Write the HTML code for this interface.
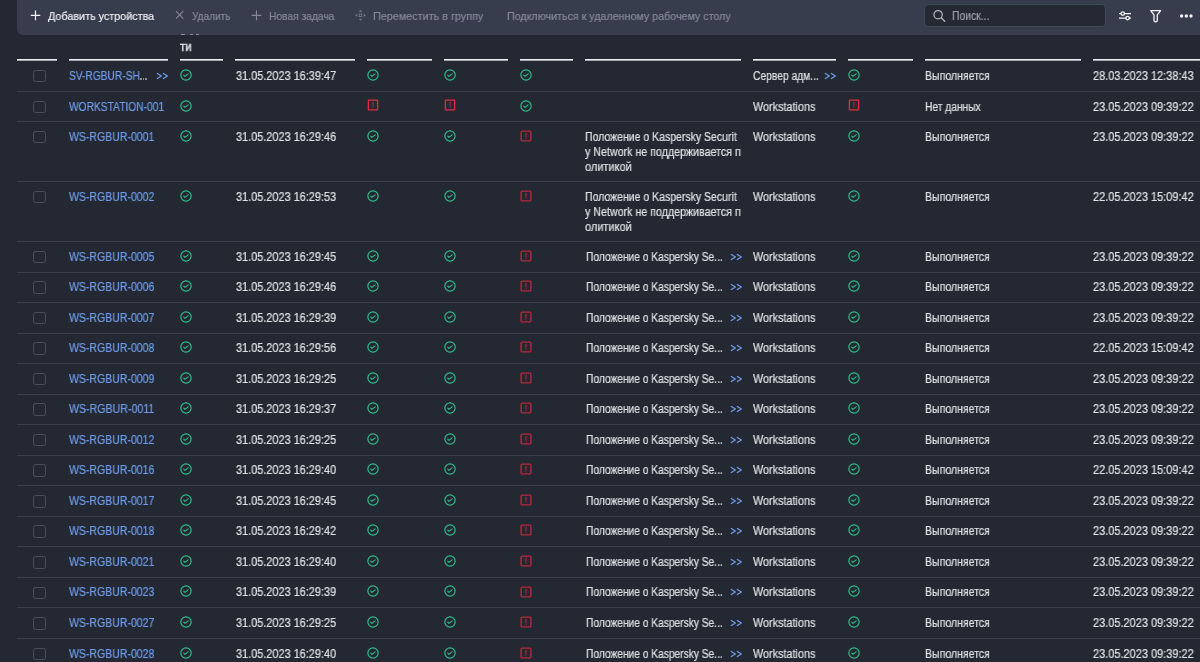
<!DOCTYPE html>
<html><head><meta charset="utf-8"><style>
html,body{margin:0;padding:0;}
body{width:1200px;height:662px;overflow:hidden;background:#232833;position:relative;font-family:"Liberation Sans",sans-serif;font-size:12px;line-height:15px;}
.t{position:absolute;white-space:nowrap;transform-origin:0 0;z-index:1;will-change:transform;-webkit-text-stroke:0.2px currentColor}
.tb{z-index:5}
</style></head><body>

<div style="position:absolute;left:17px;top:-10px;width:1200px;height:44.5px;background:#383d4e;border-radius:6px;z-index:2"></div>
<div style="position:absolute;left:923.7px;top:4.3px;width:180.8px;height:21px;background:#242934;border:1px solid #3e4b55;border-radius:4px;z-index:3"></div>
<svg style="position:absolute;left:0;top:0;z-index:4" width="1200" height="34" viewBox="0 0 1200 34">
 <path d="M35.5 10.6 V20.2 M30.7 15.4 H40.3" stroke="#f1f2f4" stroke-width="1.2"/>
 <path d="M176 11.2 L183.3 18.7 M183.3 11.2 L176 18.7" stroke="#858995" stroke-width="1.1"/>
 <path d="M256.5 10.6 V20.2 M251.7 15.4 H261.3" stroke="#858995" stroke-width="1.1"/>
 <g fill="#727788">
  <path d="M360.5 9.8 L362.3 11.9 H358.7 Z"/>
  <path d="M360.5 20.8 L362.3 18.7 H358.7 Z"/>
  <path d="M355.1 15.3 L357.2 13.5 V17.1 Z"/>
  <path d="M365.9 15.3 L363.8 13.5 V17.1 Z"/>
 </g>
 <rect x="359.2" y="14" width="2.6" height="2.6" fill="none" stroke="#727788" stroke-width="0.9"/>
 <circle cx="938.1" cy="14.7" r="4.15" fill="none" stroke="#b3b6bd" stroke-width="1.25"/>
 <path d="M941.2 17.8 L944.7 21.3" stroke="#b3b6bd" stroke-width="1.35" stroke-linecap="round"/>
 <g stroke="#f4f5f6" stroke-width="1.3" fill="none">
  <path d="M1119 13.6 H1131 M1119 18.1 H1131"/>
  <circle cx="1122.75" cy="13.6" r="1.7" fill="#383d4e"/>
  <circle cx="1127.6" cy="18.1" r="1.7" fill="#383d4e"/>
  <path d="M1150.7 10.7 H1160.6 L1157.3 14.9 V20.3 A1.65 1.65 0 0 1 1154 20.3 V14.9 Z" stroke-linejoin="round"/>
 </g>
 <g fill="#f4f5f6"><circle cx="1181.6" cy="16" r="1.65"/><circle cx="1186.3" cy="16" r="1.65"/><circle cx="1191" cy="16" r="1.65"/></g>
</svg>

<div style="position:absolute;left:33.3px;top:69.60px;width:10.6px;height:10.6px;border:1px solid #4a4f5b;border-radius:2.5px"></div><div style="position:absolute;left:140.1px;top:78.00px;width:1.7px;height:1.8px;background:#8f9299;border-radius:0.3px"></div><div style="position:absolute;left:142.6px;top:78.00px;width:1.7px;height:1.8px;background:#8f9299;border-radius:0.3px"></div><div style="position:absolute;left:145.1px;top:78.00px;width:1.7px;height:1.8px;background:#8f9299;border-radius:0.3px"></div><svg style="position:absolute;left:156.30px;top:72.00px" width="14" height="8" viewBox="0 0 14 8"><path d="M1.3 1.5 L5.4 4 L1.3 6.5 M7.3 1.5 L11.4 4 L7.3 6.5" fill="none" stroke="#709de9" stroke-width="1.2" stroke-linecap="round" stroke-linejoin="round"/></svg><svg style="position:absolute;left:179.50px;top:68.50px" width="12" height="12" viewBox="0 0 12 12"><circle cx="6" cy="6" r="5.15" fill="none" stroke="#31bf8b" stroke-width="1.15"/><path d="M3.75 6.1 L4.95 7.4 L8.15 4.85" fill="none" stroke="#31bf8b" stroke-width="1.05" stroke-linecap="round" stroke-linejoin="round"/></svg><svg style="position:absolute;left:366.50px;top:68.50px" width="12" height="12" viewBox="0 0 12 12"><circle cx="6" cy="6" r="5.15" fill="none" stroke="#31bf8b" stroke-width="1.15"/><path d="M3.75 6.1 L4.95 7.4 L8.15 4.85" fill="none" stroke="#31bf8b" stroke-width="1.05" stroke-linecap="round" stroke-linejoin="round"/></svg><svg style="position:absolute;left:443.50px;top:68.50px" width="12" height="12" viewBox="0 0 12 12"><circle cx="6" cy="6" r="5.15" fill="none" stroke="#31bf8b" stroke-width="1.15"/><path d="M3.75 6.1 L4.95 7.4 L8.15 4.85" fill="none" stroke="#31bf8b" stroke-width="1.05" stroke-linecap="round" stroke-linejoin="round"/></svg><svg style="position:absolute;left:519.50px;top:68.50px" width="12" height="12" viewBox="0 0 12 12"><circle cx="6" cy="6" r="5.15" fill="none" stroke="#31bf8b" stroke-width="1.15"/><path d="M3.75 6.1 L4.95 7.4 L8.15 4.85" fill="none" stroke="#31bf8b" stroke-width="1.05" stroke-linecap="round" stroke-linejoin="round"/></svg><svg style="position:absolute;left:824.00px;top:72.00px" width="14" height="8" viewBox="0 0 14 8"><path d="M1.3 1.5 L5.4 4 L1.3 6.5 M7.3 1.5 L11.4 4 L7.3 6.5" fill="none" stroke="#709de9" stroke-width="1.2" stroke-linecap="round" stroke-linejoin="round"/></svg><svg style="position:absolute;left:847.50px;top:68.50px" width="12" height="12" viewBox="0 0 12 12"><circle cx="6" cy="6" r="5.15" fill="none" stroke="#31bf8b" stroke-width="1.15"/><path d="M3.75 6.1 L4.95 7.4 L8.15 4.85" fill="none" stroke="#31bf8b" stroke-width="1.05" stroke-linecap="round" stroke-linejoin="round"/></svg><div style="position:absolute;left:17px;right:0;top:91.00px;height:1px;background:#3a3f4b"></div><div style="position:absolute;left:33.3px;top:100.60px;width:10.6px;height:10.6px;border:1px solid #4a4f5b;border-radius:2.5px"></div><svg style="position:absolute;left:179.50px;top:99.50px" width="12" height="12" viewBox="0 0 12 12"><circle cx="6" cy="6" r="5.15" fill="none" stroke="#31bf8b" stroke-width="1.15"/><path d="M3.75 6.1 L4.95 7.4 L8.15 4.85" fill="none" stroke="#31bf8b" stroke-width="1.05" stroke-linecap="round" stroke-linejoin="round"/></svg><svg style="position:absolute;left:366.90px;top:99.40px" width="12" height="12" viewBox="0 0 12 12"><rect x="1.4" y="1.1" width="9.2" height="9.8" rx="0.4" fill="none" stroke="#e52a40" stroke-width="1.3"/><path d="M6 3.1 V7.2" stroke="#e52a40" stroke-width="1" stroke-linecap="round" opacity="0.85"/><circle cx="6" cy="8.8" r="0.55" fill="#e52a40" opacity="0.8"/></svg><svg style="position:absolute;left:443.90px;top:99.40px" width="12" height="12" viewBox="0 0 12 12"><rect x="1.4" y="1.1" width="9.2" height="9.8" rx="0.4" fill="none" stroke="#e52a40" stroke-width="1.3"/><path d="M6 3.1 V7.2" stroke="#e52a40" stroke-width="1" stroke-linecap="round" opacity="0.85"/><circle cx="6" cy="8.8" r="0.55" fill="#e52a40" opacity="0.8"/></svg><svg style="position:absolute;left:519.50px;top:99.50px" width="12" height="12" viewBox="0 0 12 12"><circle cx="6" cy="6" r="5.15" fill="none" stroke="#31bf8b" stroke-width="1.15"/><path d="M3.75 6.1 L4.95 7.4 L8.15 4.85" fill="none" stroke="#31bf8b" stroke-width="1.05" stroke-linecap="round" stroke-linejoin="round"/></svg><svg style="position:absolute;left:847.90px;top:99.40px" width="12" height="12" viewBox="0 0 12 12"><rect x="1.4" y="1.1" width="9.2" height="9.8" rx="0.4" fill="none" stroke="#e52a40" stroke-width="1.3"/><path d="M6 3.1 V7.2" stroke="#e52a40" stroke-width="1" stroke-linecap="round" opacity="0.85"/><circle cx="6" cy="8.8" r="0.55" fill="#e52a40" opacity="0.8"/></svg><div style="position:absolute;left:17px;right:0;top:121.00px;height:1px;background:#3a3f4b"></div><div style="position:absolute;left:33.3px;top:130.60px;width:10.6px;height:10.6px;border:1px solid #4a4f5b;border-radius:2.5px"></div><svg style="position:absolute;left:179.50px;top:129.50px" width="12" height="12" viewBox="0 0 12 12"><circle cx="6" cy="6" r="5.15" fill="none" stroke="#31bf8b" stroke-width="1.15"/><path d="M3.75 6.1 L4.95 7.4 L8.15 4.85" fill="none" stroke="#31bf8b" stroke-width="1.05" stroke-linecap="round" stroke-linejoin="round"/></svg><svg style="position:absolute;left:366.50px;top:129.50px" width="12" height="12" viewBox="0 0 12 12"><circle cx="6" cy="6" r="5.15" fill="none" stroke="#31bf8b" stroke-width="1.15"/><path d="M3.75 6.1 L4.95 7.4 L8.15 4.85" fill="none" stroke="#31bf8b" stroke-width="1.05" stroke-linecap="round" stroke-linejoin="round"/></svg><svg style="position:absolute;left:443.50px;top:129.50px" width="12" height="12" viewBox="0 0 12 12"><circle cx="6" cy="6" r="5.15" fill="none" stroke="#31bf8b" stroke-width="1.15"/><path d="M3.75 6.1 L4.95 7.4 L8.15 4.85" fill="none" stroke="#31bf8b" stroke-width="1.05" stroke-linecap="round" stroke-linejoin="round"/></svg><svg style="position:absolute;left:519.60px;top:129.60px" width="12" height="12" viewBox="0 0 12 12"><rect x="1.1" y="1.1" width="9.8" height="9.8" rx="0.9" fill="none" stroke="#b6283b" stroke-width="1.4"/><path d="M6 3.4 V6.9" stroke="#b6283b" stroke-width="1.1" stroke-linecap="round"/><circle cx="6" cy="8.6" r="0.6" fill="#b6283b" opacity="0.8"/></svg><svg style="position:absolute;left:847.50px;top:129.50px" width="12" height="12" viewBox="0 0 12 12"><circle cx="6" cy="6" r="5.15" fill="none" stroke="#31bf8b" stroke-width="1.15"/><path d="M3.75 6.1 L4.95 7.4 L8.15 4.85" fill="none" stroke="#31bf8b" stroke-width="1.05" stroke-linecap="round" stroke-linejoin="round"/></svg><div style="position:absolute;left:17px;right:0;top:181.00px;height:1px;background:#3a3f4b"></div><div style="position:absolute;left:33.3px;top:190.60px;width:10.6px;height:10.6px;border:1px solid #4a4f5b;border-radius:2.5px"></div><svg style="position:absolute;left:179.50px;top:189.50px" width="12" height="12" viewBox="0 0 12 12"><circle cx="6" cy="6" r="5.15" fill="none" stroke="#31bf8b" stroke-width="1.15"/><path d="M3.75 6.1 L4.95 7.4 L8.15 4.85" fill="none" stroke="#31bf8b" stroke-width="1.05" stroke-linecap="round" stroke-linejoin="round"/></svg><svg style="position:absolute;left:366.50px;top:189.50px" width="12" height="12" viewBox="0 0 12 12"><circle cx="6" cy="6" r="5.15" fill="none" stroke="#31bf8b" stroke-width="1.15"/><path d="M3.75 6.1 L4.95 7.4 L8.15 4.85" fill="none" stroke="#31bf8b" stroke-width="1.05" stroke-linecap="round" stroke-linejoin="round"/></svg><svg style="position:absolute;left:443.50px;top:189.50px" width="12" height="12" viewBox="0 0 12 12"><circle cx="6" cy="6" r="5.15" fill="none" stroke="#31bf8b" stroke-width="1.15"/><path d="M3.75 6.1 L4.95 7.4 L8.15 4.85" fill="none" stroke="#31bf8b" stroke-width="1.05" stroke-linecap="round" stroke-linejoin="round"/></svg><svg style="position:absolute;left:519.60px;top:189.60px" width="12" height="12" viewBox="0 0 12 12"><rect x="1.1" y="1.1" width="9.8" height="9.8" rx="0.9" fill="none" stroke="#b6283b" stroke-width="1.4"/><path d="M6 3.4 V6.9" stroke="#b6283b" stroke-width="1.1" stroke-linecap="round"/><circle cx="6" cy="8.6" r="0.6" fill="#b6283b" opacity="0.8"/></svg><svg style="position:absolute;left:847.50px;top:189.50px" width="12" height="12" viewBox="0 0 12 12"><circle cx="6" cy="6" r="5.15" fill="none" stroke="#31bf8b" stroke-width="1.15"/><path d="M3.75 6.1 L4.95 7.4 L8.15 4.85" fill="none" stroke="#31bf8b" stroke-width="1.05" stroke-linecap="round" stroke-linejoin="round"/></svg><div style="position:absolute;left:17px;right:0;top:241.00px;height:1px;background:#3a3f4b"></div><div style="position:absolute;left:33.3px;top:250.60px;width:10.6px;height:10.6px;border:1px solid #4a4f5b;border-radius:2.5px"></div><svg style="position:absolute;left:179.50px;top:249.50px" width="12" height="12" viewBox="0 0 12 12"><circle cx="6" cy="6" r="5.15" fill="none" stroke="#31bf8b" stroke-width="1.15"/><path d="M3.75 6.1 L4.95 7.4 L8.15 4.85" fill="none" stroke="#31bf8b" stroke-width="1.05" stroke-linecap="round" stroke-linejoin="round"/></svg><svg style="position:absolute;left:366.50px;top:249.50px" width="12" height="12" viewBox="0 0 12 12"><circle cx="6" cy="6" r="5.15" fill="none" stroke="#31bf8b" stroke-width="1.15"/><path d="M3.75 6.1 L4.95 7.4 L8.15 4.85" fill="none" stroke="#31bf8b" stroke-width="1.05" stroke-linecap="round" stroke-linejoin="round"/></svg><svg style="position:absolute;left:443.50px;top:249.50px" width="12" height="12" viewBox="0 0 12 12"><circle cx="6" cy="6" r="5.15" fill="none" stroke="#31bf8b" stroke-width="1.15"/><path d="M3.75 6.1 L4.95 7.4 L8.15 4.85" fill="none" stroke="#31bf8b" stroke-width="1.05" stroke-linecap="round" stroke-linejoin="round"/></svg><svg style="position:absolute;left:519.60px;top:249.60px" width="12" height="12" viewBox="0 0 12 12"><rect x="1.1" y="1.1" width="9.8" height="9.8" rx="0.9" fill="none" stroke="#b6283b" stroke-width="1.4"/><path d="M6 3.4 V6.9" stroke="#b6283b" stroke-width="1.1" stroke-linecap="round"/><circle cx="6" cy="8.6" r="0.6" fill="#b6283b" opacity="0.8"/></svg><svg style="position:absolute;left:729.50px;top:252.50px" width="14" height="8" viewBox="0 0 14 8"><path d="M1.3 1.5 L5.4 4 L1.3 6.5 M7.3 1.5 L11.4 4 L7.3 6.5" fill="none" stroke="#709de9" stroke-width="1.2" stroke-linecap="round" stroke-linejoin="round"/></svg><svg style="position:absolute;left:847.50px;top:249.50px" width="12" height="12" viewBox="0 0 12 12"><circle cx="6" cy="6" r="5.15" fill="none" stroke="#31bf8b" stroke-width="1.15"/><path d="M3.75 6.1 L4.95 7.4 L8.15 4.85" fill="none" stroke="#31bf8b" stroke-width="1.05" stroke-linecap="round" stroke-linejoin="round"/></svg><div style="position:absolute;left:17px;right:0;top:271.54px;height:1px;background:#3a3f4b"></div><div style="position:absolute;left:33.3px;top:281.14px;width:10.6px;height:10.6px;border:1px solid #4a4f5b;border-radius:2.5px"></div><svg style="position:absolute;left:179.50px;top:280.04px" width="12" height="12" viewBox="0 0 12 12"><circle cx="6" cy="6" r="5.15" fill="none" stroke="#31bf8b" stroke-width="1.15"/><path d="M3.75 6.1 L4.95 7.4 L8.15 4.85" fill="none" stroke="#31bf8b" stroke-width="1.05" stroke-linecap="round" stroke-linejoin="round"/></svg><svg style="position:absolute;left:366.50px;top:280.04px" width="12" height="12" viewBox="0 0 12 12"><circle cx="6" cy="6" r="5.15" fill="none" stroke="#31bf8b" stroke-width="1.15"/><path d="M3.75 6.1 L4.95 7.4 L8.15 4.85" fill="none" stroke="#31bf8b" stroke-width="1.05" stroke-linecap="round" stroke-linejoin="round"/></svg><svg style="position:absolute;left:443.50px;top:280.04px" width="12" height="12" viewBox="0 0 12 12"><circle cx="6" cy="6" r="5.15" fill="none" stroke="#31bf8b" stroke-width="1.15"/><path d="M3.75 6.1 L4.95 7.4 L8.15 4.85" fill="none" stroke="#31bf8b" stroke-width="1.05" stroke-linecap="round" stroke-linejoin="round"/></svg><svg style="position:absolute;left:519.60px;top:280.14px" width="12" height="12" viewBox="0 0 12 12"><rect x="1.1" y="1.1" width="9.8" height="9.8" rx="0.9" fill="none" stroke="#b6283b" stroke-width="1.4"/><path d="M6 3.4 V6.9" stroke="#b6283b" stroke-width="1.1" stroke-linecap="round"/><circle cx="6" cy="8.6" r="0.6" fill="#b6283b" opacity="0.8"/></svg><svg style="position:absolute;left:729.50px;top:283.04px" width="14" height="8" viewBox="0 0 14 8"><path d="M1.3 1.5 L5.4 4 L1.3 6.5 M7.3 1.5 L11.4 4 L7.3 6.5" fill="none" stroke="#709de9" stroke-width="1.2" stroke-linecap="round" stroke-linejoin="round"/></svg><svg style="position:absolute;left:847.50px;top:280.04px" width="12" height="12" viewBox="0 0 12 12"><circle cx="6" cy="6" r="5.15" fill="none" stroke="#31bf8b" stroke-width="1.15"/><path d="M3.75 6.1 L4.95 7.4 L8.15 4.85" fill="none" stroke="#31bf8b" stroke-width="1.05" stroke-linecap="round" stroke-linejoin="round"/></svg><div style="position:absolute;left:17px;right:0;top:302.08px;height:1px;background:#3a3f4b"></div><div style="position:absolute;left:33.3px;top:311.68px;width:10.6px;height:10.6px;border:1px solid #4a4f5b;border-radius:2.5px"></div><svg style="position:absolute;left:179.50px;top:310.58px" width="12" height="12" viewBox="0 0 12 12"><circle cx="6" cy="6" r="5.15" fill="none" stroke="#31bf8b" stroke-width="1.15"/><path d="M3.75 6.1 L4.95 7.4 L8.15 4.85" fill="none" stroke="#31bf8b" stroke-width="1.05" stroke-linecap="round" stroke-linejoin="round"/></svg><svg style="position:absolute;left:366.50px;top:310.58px" width="12" height="12" viewBox="0 0 12 12"><circle cx="6" cy="6" r="5.15" fill="none" stroke="#31bf8b" stroke-width="1.15"/><path d="M3.75 6.1 L4.95 7.4 L8.15 4.85" fill="none" stroke="#31bf8b" stroke-width="1.05" stroke-linecap="round" stroke-linejoin="round"/></svg><svg style="position:absolute;left:443.50px;top:310.58px" width="12" height="12" viewBox="0 0 12 12"><circle cx="6" cy="6" r="5.15" fill="none" stroke="#31bf8b" stroke-width="1.15"/><path d="M3.75 6.1 L4.95 7.4 L8.15 4.85" fill="none" stroke="#31bf8b" stroke-width="1.05" stroke-linecap="round" stroke-linejoin="round"/></svg><svg style="position:absolute;left:519.60px;top:310.68px" width="12" height="12" viewBox="0 0 12 12"><rect x="1.1" y="1.1" width="9.8" height="9.8" rx="0.9" fill="none" stroke="#b6283b" stroke-width="1.4"/><path d="M6 3.4 V6.9" stroke="#b6283b" stroke-width="1.1" stroke-linecap="round"/><circle cx="6" cy="8.6" r="0.6" fill="#b6283b" opacity="0.8"/></svg><svg style="position:absolute;left:729.50px;top:313.58px" width="14" height="8" viewBox="0 0 14 8"><path d="M1.3 1.5 L5.4 4 L1.3 6.5 M7.3 1.5 L11.4 4 L7.3 6.5" fill="none" stroke="#709de9" stroke-width="1.2" stroke-linecap="round" stroke-linejoin="round"/></svg><svg style="position:absolute;left:847.50px;top:310.58px" width="12" height="12" viewBox="0 0 12 12"><circle cx="6" cy="6" r="5.15" fill="none" stroke="#31bf8b" stroke-width="1.15"/><path d="M3.75 6.1 L4.95 7.4 L8.15 4.85" fill="none" stroke="#31bf8b" stroke-width="1.05" stroke-linecap="round" stroke-linejoin="round"/></svg><div style="position:absolute;left:17px;right:0;top:332.62px;height:1px;background:#3a3f4b"></div><div style="position:absolute;left:33.3px;top:342.22px;width:10.6px;height:10.6px;border:1px solid #4a4f5b;border-radius:2.5px"></div><svg style="position:absolute;left:179.50px;top:341.12px" width="12" height="12" viewBox="0 0 12 12"><circle cx="6" cy="6" r="5.15" fill="none" stroke="#31bf8b" stroke-width="1.15"/><path d="M3.75 6.1 L4.95 7.4 L8.15 4.85" fill="none" stroke="#31bf8b" stroke-width="1.05" stroke-linecap="round" stroke-linejoin="round"/></svg><svg style="position:absolute;left:366.50px;top:341.12px" width="12" height="12" viewBox="0 0 12 12"><circle cx="6" cy="6" r="5.15" fill="none" stroke="#31bf8b" stroke-width="1.15"/><path d="M3.75 6.1 L4.95 7.4 L8.15 4.85" fill="none" stroke="#31bf8b" stroke-width="1.05" stroke-linecap="round" stroke-linejoin="round"/></svg><svg style="position:absolute;left:443.50px;top:341.12px" width="12" height="12" viewBox="0 0 12 12"><circle cx="6" cy="6" r="5.15" fill="none" stroke="#31bf8b" stroke-width="1.15"/><path d="M3.75 6.1 L4.95 7.4 L8.15 4.85" fill="none" stroke="#31bf8b" stroke-width="1.05" stroke-linecap="round" stroke-linejoin="round"/></svg><svg style="position:absolute;left:519.60px;top:341.22px" width="12" height="12" viewBox="0 0 12 12"><rect x="1.1" y="1.1" width="9.8" height="9.8" rx="0.9" fill="none" stroke="#b6283b" stroke-width="1.4"/><path d="M6 3.4 V6.9" stroke="#b6283b" stroke-width="1.1" stroke-linecap="round"/><circle cx="6" cy="8.6" r="0.6" fill="#b6283b" opacity="0.8"/></svg><svg style="position:absolute;left:729.50px;top:344.12px" width="14" height="8" viewBox="0 0 14 8"><path d="M1.3 1.5 L5.4 4 L1.3 6.5 M7.3 1.5 L11.4 4 L7.3 6.5" fill="none" stroke="#709de9" stroke-width="1.2" stroke-linecap="round" stroke-linejoin="round"/></svg><svg style="position:absolute;left:847.50px;top:341.12px" width="12" height="12" viewBox="0 0 12 12"><circle cx="6" cy="6" r="5.15" fill="none" stroke="#31bf8b" stroke-width="1.15"/><path d="M3.75 6.1 L4.95 7.4 L8.15 4.85" fill="none" stroke="#31bf8b" stroke-width="1.05" stroke-linecap="round" stroke-linejoin="round"/></svg><div style="position:absolute;left:17px;right:0;top:363.16px;height:1px;background:#3a3f4b"></div><div style="position:absolute;left:33.3px;top:372.76px;width:10.6px;height:10.6px;border:1px solid #4a4f5b;border-radius:2.5px"></div><svg style="position:absolute;left:179.50px;top:371.66px" width="12" height="12" viewBox="0 0 12 12"><circle cx="6" cy="6" r="5.15" fill="none" stroke="#31bf8b" stroke-width="1.15"/><path d="M3.75 6.1 L4.95 7.4 L8.15 4.85" fill="none" stroke="#31bf8b" stroke-width="1.05" stroke-linecap="round" stroke-linejoin="round"/></svg><svg style="position:absolute;left:366.50px;top:371.66px" width="12" height="12" viewBox="0 0 12 12"><circle cx="6" cy="6" r="5.15" fill="none" stroke="#31bf8b" stroke-width="1.15"/><path d="M3.75 6.1 L4.95 7.4 L8.15 4.85" fill="none" stroke="#31bf8b" stroke-width="1.05" stroke-linecap="round" stroke-linejoin="round"/></svg><svg style="position:absolute;left:443.50px;top:371.66px" width="12" height="12" viewBox="0 0 12 12"><circle cx="6" cy="6" r="5.15" fill="none" stroke="#31bf8b" stroke-width="1.15"/><path d="M3.75 6.1 L4.95 7.4 L8.15 4.85" fill="none" stroke="#31bf8b" stroke-width="1.05" stroke-linecap="round" stroke-linejoin="round"/></svg><svg style="position:absolute;left:519.60px;top:371.76px" width="12" height="12" viewBox="0 0 12 12"><rect x="1.1" y="1.1" width="9.8" height="9.8" rx="0.9" fill="none" stroke="#b6283b" stroke-width="1.4"/><path d="M6 3.4 V6.9" stroke="#b6283b" stroke-width="1.1" stroke-linecap="round"/><circle cx="6" cy="8.6" r="0.6" fill="#b6283b" opacity="0.8"/></svg><svg style="position:absolute;left:729.50px;top:374.66px" width="14" height="8" viewBox="0 0 14 8"><path d="M1.3 1.5 L5.4 4 L1.3 6.5 M7.3 1.5 L11.4 4 L7.3 6.5" fill="none" stroke="#709de9" stroke-width="1.2" stroke-linecap="round" stroke-linejoin="round"/></svg><svg style="position:absolute;left:847.50px;top:371.66px" width="12" height="12" viewBox="0 0 12 12"><circle cx="6" cy="6" r="5.15" fill="none" stroke="#31bf8b" stroke-width="1.15"/><path d="M3.75 6.1 L4.95 7.4 L8.15 4.85" fill="none" stroke="#31bf8b" stroke-width="1.05" stroke-linecap="round" stroke-linejoin="round"/></svg><div style="position:absolute;left:17px;right:0;top:393.70px;height:1px;background:#3a3f4b"></div><div style="position:absolute;left:33.3px;top:403.30px;width:10.6px;height:10.6px;border:1px solid #4a4f5b;border-radius:2.5px"></div><svg style="position:absolute;left:179.50px;top:402.20px" width="12" height="12" viewBox="0 0 12 12"><circle cx="6" cy="6" r="5.15" fill="none" stroke="#31bf8b" stroke-width="1.15"/><path d="M3.75 6.1 L4.95 7.4 L8.15 4.85" fill="none" stroke="#31bf8b" stroke-width="1.05" stroke-linecap="round" stroke-linejoin="round"/></svg><svg style="position:absolute;left:366.50px;top:402.20px" width="12" height="12" viewBox="0 0 12 12"><circle cx="6" cy="6" r="5.15" fill="none" stroke="#31bf8b" stroke-width="1.15"/><path d="M3.75 6.1 L4.95 7.4 L8.15 4.85" fill="none" stroke="#31bf8b" stroke-width="1.05" stroke-linecap="round" stroke-linejoin="round"/></svg><svg style="position:absolute;left:443.50px;top:402.20px" width="12" height="12" viewBox="0 0 12 12"><circle cx="6" cy="6" r="5.15" fill="none" stroke="#31bf8b" stroke-width="1.15"/><path d="M3.75 6.1 L4.95 7.4 L8.15 4.85" fill="none" stroke="#31bf8b" stroke-width="1.05" stroke-linecap="round" stroke-linejoin="round"/></svg><svg style="position:absolute;left:519.60px;top:402.30px" width="12" height="12" viewBox="0 0 12 12"><rect x="1.1" y="1.1" width="9.8" height="9.8" rx="0.9" fill="none" stroke="#b6283b" stroke-width="1.4"/><path d="M6 3.4 V6.9" stroke="#b6283b" stroke-width="1.1" stroke-linecap="round"/><circle cx="6" cy="8.6" r="0.6" fill="#b6283b" opacity="0.8"/></svg><svg style="position:absolute;left:729.50px;top:405.20px" width="14" height="8" viewBox="0 0 14 8"><path d="M1.3 1.5 L5.4 4 L1.3 6.5 M7.3 1.5 L11.4 4 L7.3 6.5" fill="none" stroke="#709de9" stroke-width="1.2" stroke-linecap="round" stroke-linejoin="round"/></svg><svg style="position:absolute;left:847.50px;top:402.20px" width="12" height="12" viewBox="0 0 12 12"><circle cx="6" cy="6" r="5.15" fill="none" stroke="#31bf8b" stroke-width="1.15"/><path d="M3.75 6.1 L4.95 7.4 L8.15 4.85" fill="none" stroke="#31bf8b" stroke-width="1.05" stroke-linecap="round" stroke-linejoin="round"/></svg><div style="position:absolute;left:17px;right:0;top:424.24px;height:1px;background:#3a3f4b"></div><div style="position:absolute;left:33.3px;top:433.84px;width:10.6px;height:10.6px;border:1px solid #4a4f5b;border-radius:2.5px"></div><svg style="position:absolute;left:179.50px;top:432.74px" width="12" height="12" viewBox="0 0 12 12"><circle cx="6" cy="6" r="5.15" fill="none" stroke="#31bf8b" stroke-width="1.15"/><path d="M3.75 6.1 L4.95 7.4 L8.15 4.85" fill="none" stroke="#31bf8b" stroke-width="1.05" stroke-linecap="round" stroke-linejoin="round"/></svg><svg style="position:absolute;left:366.50px;top:432.74px" width="12" height="12" viewBox="0 0 12 12"><circle cx="6" cy="6" r="5.15" fill="none" stroke="#31bf8b" stroke-width="1.15"/><path d="M3.75 6.1 L4.95 7.4 L8.15 4.85" fill="none" stroke="#31bf8b" stroke-width="1.05" stroke-linecap="round" stroke-linejoin="round"/></svg><svg style="position:absolute;left:443.50px;top:432.74px" width="12" height="12" viewBox="0 0 12 12"><circle cx="6" cy="6" r="5.15" fill="none" stroke="#31bf8b" stroke-width="1.15"/><path d="M3.75 6.1 L4.95 7.4 L8.15 4.85" fill="none" stroke="#31bf8b" stroke-width="1.05" stroke-linecap="round" stroke-linejoin="round"/></svg><svg style="position:absolute;left:519.60px;top:432.84px" width="12" height="12" viewBox="0 0 12 12"><rect x="1.1" y="1.1" width="9.8" height="9.8" rx="0.9" fill="none" stroke="#b6283b" stroke-width="1.4"/><path d="M6 3.4 V6.9" stroke="#b6283b" stroke-width="1.1" stroke-linecap="round"/><circle cx="6" cy="8.6" r="0.6" fill="#b6283b" opacity="0.8"/></svg><svg style="position:absolute;left:729.50px;top:435.74px" width="14" height="8" viewBox="0 0 14 8"><path d="M1.3 1.5 L5.4 4 L1.3 6.5 M7.3 1.5 L11.4 4 L7.3 6.5" fill="none" stroke="#709de9" stroke-width="1.2" stroke-linecap="round" stroke-linejoin="round"/></svg><svg style="position:absolute;left:847.50px;top:432.74px" width="12" height="12" viewBox="0 0 12 12"><circle cx="6" cy="6" r="5.15" fill="none" stroke="#31bf8b" stroke-width="1.15"/><path d="M3.75 6.1 L4.95 7.4 L8.15 4.85" fill="none" stroke="#31bf8b" stroke-width="1.05" stroke-linecap="round" stroke-linejoin="round"/></svg><div style="position:absolute;left:17px;right:0;top:454.78px;height:1px;background:#3a3f4b"></div><div style="position:absolute;left:33.3px;top:464.38px;width:10.6px;height:10.6px;border:1px solid #4a4f5b;border-radius:2.5px"></div><svg style="position:absolute;left:179.50px;top:463.28px" width="12" height="12" viewBox="0 0 12 12"><circle cx="6" cy="6" r="5.15" fill="none" stroke="#31bf8b" stroke-width="1.15"/><path d="M3.75 6.1 L4.95 7.4 L8.15 4.85" fill="none" stroke="#31bf8b" stroke-width="1.05" stroke-linecap="round" stroke-linejoin="round"/></svg><svg style="position:absolute;left:366.50px;top:463.28px" width="12" height="12" viewBox="0 0 12 12"><circle cx="6" cy="6" r="5.15" fill="none" stroke="#31bf8b" stroke-width="1.15"/><path d="M3.75 6.1 L4.95 7.4 L8.15 4.85" fill="none" stroke="#31bf8b" stroke-width="1.05" stroke-linecap="round" stroke-linejoin="round"/></svg><svg style="position:absolute;left:443.50px;top:463.28px" width="12" height="12" viewBox="0 0 12 12"><circle cx="6" cy="6" r="5.15" fill="none" stroke="#31bf8b" stroke-width="1.15"/><path d="M3.75 6.1 L4.95 7.4 L8.15 4.85" fill="none" stroke="#31bf8b" stroke-width="1.05" stroke-linecap="round" stroke-linejoin="round"/></svg><svg style="position:absolute;left:519.60px;top:463.38px" width="12" height="12" viewBox="0 0 12 12"><rect x="1.1" y="1.1" width="9.8" height="9.8" rx="0.9" fill="none" stroke="#b6283b" stroke-width="1.4"/><path d="M6 3.4 V6.9" stroke="#b6283b" stroke-width="1.1" stroke-linecap="round"/><circle cx="6" cy="8.6" r="0.6" fill="#b6283b" opacity="0.8"/></svg><svg style="position:absolute;left:729.50px;top:466.28px" width="14" height="8" viewBox="0 0 14 8"><path d="M1.3 1.5 L5.4 4 L1.3 6.5 M7.3 1.5 L11.4 4 L7.3 6.5" fill="none" stroke="#709de9" stroke-width="1.2" stroke-linecap="round" stroke-linejoin="round"/></svg><svg style="position:absolute;left:847.50px;top:463.28px" width="12" height="12" viewBox="0 0 12 12"><circle cx="6" cy="6" r="5.15" fill="none" stroke="#31bf8b" stroke-width="1.15"/><path d="M3.75 6.1 L4.95 7.4 L8.15 4.85" fill="none" stroke="#31bf8b" stroke-width="1.05" stroke-linecap="round" stroke-linejoin="round"/></svg><div style="position:absolute;left:17px;right:0;top:485.32px;height:1px;background:#3a3f4b"></div><div style="position:absolute;left:33.3px;top:494.92px;width:10.6px;height:10.6px;border:1px solid #4a4f5b;border-radius:2.5px"></div><svg style="position:absolute;left:179.50px;top:493.82px" width="12" height="12" viewBox="0 0 12 12"><circle cx="6" cy="6" r="5.15" fill="none" stroke="#31bf8b" stroke-width="1.15"/><path d="M3.75 6.1 L4.95 7.4 L8.15 4.85" fill="none" stroke="#31bf8b" stroke-width="1.05" stroke-linecap="round" stroke-linejoin="round"/></svg><svg style="position:absolute;left:366.50px;top:493.82px" width="12" height="12" viewBox="0 0 12 12"><circle cx="6" cy="6" r="5.15" fill="none" stroke="#31bf8b" stroke-width="1.15"/><path d="M3.75 6.1 L4.95 7.4 L8.15 4.85" fill="none" stroke="#31bf8b" stroke-width="1.05" stroke-linecap="round" stroke-linejoin="round"/></svg><svg style="position:absolute;left:443.50px;top:493.82px" width="12" height="12" viewBox="0 0 12 12"><circle cx="6" cy="6" r="5.15" fill="none" stroke="#31bf8b" stroke-width="1.15"/><path d="M3.75 6.1 L4.95 7.4 L8.15 4.85" fill="none" stroke="#31bf8b" stroke-width="1.05" stroke-linecap="round" stroke-linejoin="round"/></svg><svg style="position:absolute;left:519.60px;top:493.92px" width="12" height="12" viewBox="0 0 12 12"><rect x="1.1" y="1.1" width="9.8" height="9.8" rx="0.9" fill="none" stroke="#b6283b" stroke-width="1.4"/><path d="M6 3.4 V6.9" stroke="#b6283b" stroke-width="1.1" stroke-linecap="round"/><circle cx="6" cy="8.6" r="0.6" fill="#b6283b" opacity="0.8"/></svg><svg style="position:absolute;left:729.50px;top:496.82px" width="14" height="8" viewBox="0 0 14 8"><path d="M1.3 1.5 L5.4 4 L1.3 6.5 M7.3 1.5 L11.4 4 L7.3 6.5" fill="none" stroke="#709de9" stroke-width="1.2" stroke-linecap="round" stroke-linejoin="round"/></svg><svg style="position:absolute;left:847.50px;top:493.82px" width="12" height="12" viewBox="0 0 12 12"><circle cx="6" cy="6" r="5.15" fill="none" stroke="#31bf8b" stroke-width="1.15"/><path d="M3.75 6.1 L4.95 7.4 L8.15 4.85" fill="none" stroke="#31bf8b" stroke-width="1.05" stroke-linecap="round" stroke-linejoin="round"/></svg><div style="position:absolute;left:17px;right:0;top:515.86px;height:1px;background:#3a3f4b"></div><div style="position:absolute;left:33.3px;top:525.46px;width:10.6px;height:10.6px;border:1px solid #4a4f5b;border-radius:2.5px"></div><svg style="position:absolute;left:179.50px;top:524.36px" width="12" height="12" viewBox="0 0 12 12"><circle cx="6" cy="6" r="5.15" fill="none" stroke="#31bf8b" stroke-width="1.15"/><path d="M3.75 6.1 L4.95 7.4 L8.15 4.85" fill="none" stroke="#31bf8b" stroke-width="1.05" stroke-linecap="round" stroke-linejoin="round"/></svg><svg style="position:absolute;left:366.50px;top:524.36px" width="12" height="12" viewBox="0 0 12 12"><circle cx="6" cy="6" r="5.15" fill="none" stroke="#31bf8b" stroke-width="1.15"/><path d="M3.75 6.1 L4.95 7.4 L8.15 4.85" fill="none" stroke="#31bf8b" stroke-width="1.05" stroke-linecap="round" stroke-linejoin="round"/></svg><svg style="position:absolute;left:443.50px;top:524.36px" width="12" height="12" viewBox="0 0 12 12"><circle cx="6" cy="6" r="5.15" fill="none" stroke="#31bf8b" stroke-width="1.15"/><path d="M3.75 6.1 L4.95 7.4 L8.15 4.85" fill="none" stroke="#31bf8b" stroke-width="1.05" stroke-linecap="round" stroke-linejoin="round"/></svg><svg style="position:absolute;left:519.60px;top:524.46px" width="12" height="12" viewBox="0 0 12 12"><rect x="1.1" y="1.1" width="9.8" height="9.8" rx="0.9" fill="none" stroke="#b6283b" stroke-width="1.4"/><path d="M6 3.4 V6.9" stroke="#b6283b" stroke-width="1.1" stroke-linecap="round"/><circle cx="6" cy="8.6" r="0.6" fill="#b6283b" opacity="0.8"/></svg><svg style="position:absolute;left:729.50px;top:527.36px" width="14" height="8" viewBox="0 0 14 8"><path d="M1.3 1.5 L5.4 4 L1.3 6.5 M7.3 1.5 L11.4 4 L7.3 6.5" fill="none" stroke="#709de9" stroke-width="1.2" stroke-linecap="round" stroke-linejoin="round"/></svg><svg style="position:absolute;left:847.50px;top:524.36px" width="12" height="12" viewBox="0 0 12 12"><circle cx="6" cy="6" r="5.15" fill="none" stroke="#31bf8b" stroke-width="1.15"/><path d="M3.75 6.1 L4.95 7.4 L8.15 4.85" fill="none" stroke="#31bf8b" stroke-width="1.05" stroke-linecap="round" stroke-linejoin="round"/></svg><div style="position:absolute;left:17px;right:0;top:546.40px;height:1px;background:#3a3f4b"></div><div style="position:absolute;left:33.3px;top:556.00px;width:10.6px;height:10.6px;border:1px solid #4a4f5b;border-radius:2.5px"></div><svg style="position:absolute;left:179.50px;top:554.90px" width="12" height="12" viewBox="0 0 12 12"><circle cx="6" cy="6" r="5.15" fill="none" stroke="#31bf8b" stroke-width="1.15"/><path d="M3.75 6.1 L4.95 7.4 L8.15 4.85" fill="none" stroke="#31bf8b" stroke-width="1.05" stroke-linecap="round" stroke-linejoin="round"/></svg><svg style="position:absolute;left:366.50px;top:554.90px" width="12" height="12" viewBox="0 0 12 12"><circle cx="6" cy="6" r="5.15" fill="none" stroke="#31bf8b" stroke-width="1.15"/><path d="M3.75 6.1 L4.95 7.4 L8.15 4.85" fill="none" stroke="#31bf8b" stroke-width="1.05" stroke-linecap="round" stroke-linejoin="round"/></svg><svg style="position:absolute;left:443.50px;top:554.90px" width="12" height="12" viewBox="0 0 12 12"><circle cx="6" cy="6" r="5.15" fill="none" stroke="#31bf8b" stroke-width="1.15"/><path d="M3.75 6.1 L4.95 7.4 L8.15 4.85" fill="none" stroke="#31bf8b" stroke-width="1.05" stroke-linecap="round" stroke-linejoin="round"/></svg><svg style="position:absolute;left:519.60px;top:555.00px" width="12" height="12" viewBox="0 0 12 12"><rect x="1.1" y="1.1" width="9.8" height="9.8" rx="0.9" fill="none" stroke="#b6283b" stroke-width="1.4"/><path d="M6 3.4 V6.9" stroke="#b6283b" stroke-width="1.1" stroke-linecap="round"/><circle cx="6" cy="8.6" r="0.6" fill="#b6283b" opacity="0.8"/></svg><svg style="position:absolute;left:729.50px;top:557.90px" width="14" height="8" viewBox="0 0 14 8"><path d="M1.3 1.5 L5.4 4 L1.3 6.5 M7.3 1.5 L11.4 4 L7.3 6.5" fill="none" stroke="#709de9" stroke-width="1.2" stroke-linecap="round" stroke-linejoin="round"/></svg><svg style="position:absolute;left:847.50px;top:554.90px" width="12" height="12" viewBox="0 0 12 12"><circle cx="6" cy="6" r="5.15" fill="none" stroke="#31bf8b" stroke-width="1.15"/><path d="M3.75 6.1 L4.95 7.4 L8.15 4.85" fill="none" stroke="#31bf8b" stroke-width="1.05" stroke-linecap="round" stroke-linejoin="round"/></svg><div style="position:absolute;left:17px;right:0;top:576.94px;height:1px;background:#3a3f4b"></div><div style="position:absolute;left:33.3px;top:586.54px;width:10.6px;height:10.6px;border:1px solid #4a4f5b;border-radius:2.5px"></div><svg style="position:absolute;left:179.50px;top:585.44px" width="12" height="12" viewBox="0 0 12 12"><circle cx="6" cy="6" r="5.15" fill="none" stroke="#31bf8b" stroke-width="1.15"/><path d="M3.75 6.1 L4.95 7.4 L8.15 4.85" fill="none" stroke="#31bf8b" stroke-width="1.05" stroke-linecap="round" stroke-linejoin="round"/></svg><svg style="position:absolute;left:366.50px;top:585.44px" width="12" height="12" viewBox="0 0 12 12"><circle cx="6" cy="6" r="5.15" fill="none" stroke="#31bf8b" stroke-width="1.15"/><path d="M3.75 6.1 L4.95 7.4 L8.15 4.85" fill="none" stroke="#31bf8b" stroke-width="1.05" stroke-linecap="round" stroke-linejoin="round"/></svg><svg style="position:absolute;left:443.50px;top:585.44px" width="12" height="12" viewBox="0 0 12 12"><circle cx="6" cy="6" r="5.15" fill="none" stroke="#31bf8b" stroke-width="1.15"/><path d="M3.75 6.1 L4.95 7.4 L8.15 4.85" fill="none" stroke="#31bf8b" stroke-width="1.05" stroke-linecap="round" stroke-linejoin="round"/></svg><svg style="position:absolute;left:519.60px;top:585.54px" width="12" height="12" viewBox="0 0 12 12"><rect x="1.1" y="1.1" width="9.8" height="9.8" rx="0.9" fill="none" stroke="#b6283b" stroke-width="1.4"/><path d="M6 3.4 V6.9" stroke="#b6283b" stroke-width="1.1" stroke-linecap="round"/><circle cx="6" cy="8.6" r="0.6" fill="#b6283b" opacity="0.8"/></svg><svg style="position:absolute;left:729.50px;top:588.44px" width="14" height="8" viewBox="0 0 14 8"><path d="M1.3 1.5 L5.4 4 L1.3 6.5 M7.3 1.5 L11.4 4 L7.3 6.5" fill="none" stroke="#709de9" stroke-width="1.2" stroke-linecap="round" stroke-linejoin="round"/></svg><svg style="position:absolute;left:847.50px;top:585.44px" width="12" height="12" viewBox="0 0 12 12"><circle cx="6" cy="6" r="5.15" fill="none" stroke="#31bf8b" stroke-width="1.15"/><path d="M3.75 6.1 L4.95 7.4 L8.15 4.85" fill="none" stroke="#31bf8b" stroke-width="1.05" stroke-linecap="round" stroke-linejoin="round"/></svg><div style="position:absolute;left:17px;right:0;top:607.48px;height:1px;background:#3a3f4b"></div><div style="position:absolute;left:33.3px;top:617.08px;width:10.6px;height:10.6px;border:1px solid #4a4f5b;border-radius:2.5px"></div><svg style="position:absolute;left:179.50px;top:615.98px" width="12" height="12" viewBox="0 0 12 12"><circle cx="6" cy="6" r="5.15" fill="none" stroke="#31bf8b" stroke-width="1.15"/><path d="M3.75 6.1 L4.95 7.4 L8.15 4.85" fill="none" stroke="#31bf8b" stroke-width="1.05" stroke-linecap="round" stroke-linejoin="round"/></svg><svg style="position:absolute;left:366.50px;top:615.98px" width="12" height="12" viewBox="0 0 12 12"><circle cx="6" cy="6" r="5.15" fill="none" stroke="#31bf8b" stroke-width="1.15"/><path d="M3.75 6.1 L4.95 7.4 L8.15 4.85" fill="none" stroke="#31bf8b" stroke-width="1.05" stroke-linecap="round" stroke-linejoin="round"/></svg><svg style="position:absolute;left:443.50px;top:615.98px" width="12" height="12" viewBox="0 0 12 12"><circle cx="6" cy="6" r="5.15" fill="none" stroke="#31bf8b" stroke-width="1.15"/><path d="M3.75 6.1 L4.95 7.4 L8.15 4.85" fill="none" stroke="#31bf8b" stroke-width="1.05" stroke-linecap="round" stroke-linejoin="round"/></svg><svg style="position:absolute;left:519.60px;top:616.08px" width="12" height="12" viewBox="0 0 12 12"><rect x="1.1" y="1.1" width="9.8" height="9.8" rx="0.9" fill="none" stroke="#b6283b" stroke-width="1.4"/><path d="M6 3.4 V6.9" stroke="#b6283b" stroke-width="1.1" stroke-linecap="round"/><circle cx="6" cy="8.6" r="0.6" fill="#b6283b" opacity="0.8"/></svg><svg style="position:absolute;left:729.50px;top:618.98px" width="14" height="8" viewBox="0 0 14 8"><path d="M1.3 1.5 L5.4 4 L1.3 6.5 M7.3 1.5 L11.4 4 L7.3 6.5" fill="none" stroke="#709de9" stroke-width="1.2" stroke-linecap="round" stroke-linejoin="round"/></svg><svg style="position:absolute;left:847.50px;top:615.98px" width="12" height="12" viewBox="0 0 12 12"><circle cx="6" cy="6" r="5.15" fill="none" stroke="#31bf8b" stroke-width="1.15"/><path d="M3.75 6.1 L4.95 7.4 L8.15 4.85" fill="none" stroke="#31bf8b" stroke-width="1.05" stroke-linecap="round" stroke-linejoin="round"/></svg><div style="position:absolute;left:17px;right:0;top:638.02px;height:1px;background:#3a3f4b"></div><div style="position:absolute;left:33.3px;top:647.62px;width:10.6px;height:10.6px;border:1px solid #4a4f5b;border-radius:2.5px"></div><svg style="position:absolute;left:179.50px;top:646.52px" width="12" height="12" viewBox="0 0 12 12"><circle cx="6" cy="6" r="5.15" fill="none" stroke="#31bf8b" stroke-width="1.15"/><path d="M3.75 6.1 L4.95 7.4 L8.15 4.85" fill="none" stroke="#31bf8b" stroke-width="1.05" stroke-linecap="round" stroke-linejoin="round"/></svg><svg style="position:absolute;left:366.50px;top:646.52px" width="12" height="12" viewBox="0 0 12 12"><circle cx="6" cy="6" r="5.15" fill="none" stroke="#31bf8b" stroke-width="1.15"/><path d="M3.75 6.1 L4.95 7.4 L8.15 4.85" fill="none" stroke="#31bf8b" stroke-width="1.05" stroke-linecap="round" stroke-linejoin="round"/></svg><svg style="position:absolute;left:443.50px;top:646.52px" width="12" height="12" viewBox="0 0 12 12"><circle cx="6" cy="6" r="5.15" fill="none" stroke="#31bf8b" stroke-width="1.15"/><path d="M3.75 6.1 L4.95 7.4 L8.15 4.85" fill="none" stroke="#31bf8b" stroke-width="1.05" stroke-linecap="round" stroke-linejoin="round"/></svg><svg style="position:absolute;left:519.60px;top:646.62px" width="12" height="12" viewBox="0 0 12 12"><rect x="1.1" y="1.1" width="9.8" height="9.8" rx="0.9" fill="none" stroke="#b6283b" stroke-width="1.4"/><path d="M6 3.4 V6.9" stroke="#b6283b" stroke-width="1.1" stroke-linecap="round"/><circle cx="6" cy="8.6" r="0.6" fill="#b6283b" opacity="0.8"/></svg><svg style="position:absolute;left:729.50px;top:649.52px" width="14" height="8" viewBox="0 0 14 8"><path d="M1.3 1.5 L5.4 4 L1.3 6.5 M7.3 1.5 L11.4 4 L7.3 6.5" fill="none" stroke="#709de9" stroke-width="1.2" stroke-linecap="round" stroke-linejoin="round"/></svg><svg style="position:absolute;left:847.50px;top:646.52px" width="12" height="12" viewBox="0 0 12 12"><circle cx="6" cy="6" r="5.15" fill="none" stroke="#31bf8b" stroke-width="1.15"/><path d="M3.75 6.1 L4.95 7.4 L8.15 4.85" fill="none" stroke="#31bf8b" stroke-width="1.05" stroke-linecap="round" stroke-linejoin="round"/></svg><div style="position:absolute;left:17px;top:59px;width:40px;height:2px;background:linear-gradient(#eceef1 50%,#a3a6ad 50%)"></div><div style="position:absolute;left:69px;top:59px;width:99px;height:2px;background:linear-gradient(#eceef1 50%,#a3a6ad 50%)"></div><div style="position:absolute;left:180px;top:59px;width:43px;height:2px;background:linear-gradient(#eceef1 50%,#a3a6ad 50%)"></div><div style="position:absolute;left:235px;top:59px;width:120px;height:2px;background:linear-gradient(#eceef1 50%,#a3a6ad 50%)"></div><div style="position:absolute;left:367px;top:59px;width:65px;height:2px;background:linear-gradient(#eceef1 50%,#a3a6ad 50%)"></div><div style="position:absolute;left:444px;top:59px;width:64px;height:2px;background:linear-gradient(#eceef1 50%,#a3a6ad 50%)"></div><div style="position:absolute;left:520px;top:59px;width:53px;height:2px;background:linear-gradient(#eceef1 50%,#a3a6ad 50%)"></div><div style="position:absolute;left:585px;top:59px;width:156px;height:2px;background:linear-gradient(#eceef1 50%,#a3a6ad 50%)"></div><div style="position:absolute;left:753px;top:59px;width:83px;height:2px;background:linear-gradient(#eceef1 50%,#a3a6ad 50%)"></div><div style="position:absolute;left:848px;top:59px;width:65px;height:2px;background:linear-gradient(#eceef1 50%,#a3a6ad 50%)"></div><div style="position:absolute;left:925px;top:59px;width:156px;height:2px;background:linear-gradient(#eceef1 50%,#a3a6ad 50%)"></div><div style="position:absolute;left:1093px;top:59px;width:107px;height:2px;background:linear-gradient(#eceef1 50%,#a3a6ad 50%)"></div><div style="position:absolute;left:181px;top:34.1px;width:4px;height:1.1px;background:#8d9098;z-index:3"></div><div style="position:absolute;left:190px;top:34.1px;width:3px;height:1.1px;background:#8d9098;z-index:3"></div><div style="position:absolute;left:195.7px;top:34.1px;width:3.3000000000000114px;height:1.1px;background:#8d9098;z-index:3"></div>
<div class="t" style="left:68.80px;top:69.00px;color:#709de9;font-weight:normal;transform:scaleX(0.8491);">SV-RGBUR-SH</div><div class="t" style="left:235.80px;top:69.00px;color:#dfe1e5;font-weight:normal;transform:scaleX(0.9092);">31.05.2023 16:39:47</div><div class="t" style="left:753.40px;top:69.00px;color:#dfe1e5;font-weight:normal;transform:scaleX(0.8572);">Сервер адм...</div><div class="t" style="left:924.80px;top:69.00px;color:#dfe1e5;font-weight:normal;transform:scaleX(0.8786);">Выполняется</div><div class="t" style="left:1093.00px;top:69.00px;color:#dfe1e5;font-weight:normal;transform:scaleX(0.9146);">28.03.2023 12:38:43</div><div class="t" style="left:69.20px;top:100.00px;color:#709de9;font-weight:normal;transform:scaleX(0.8517);">WORKSTATION-001</div><div class="t" style="left:753.40px;top:100.00px;color:#dfe1e5;font-weight:normal;transform:scaleX(0.9026);">Workstations</div><div class="t" style="left:924.80px;top:100.00px;color:#dfe1e5;font-weight:normal;transform:scaleX(0.8526);">Нет данных</div><div class="t" style="left:1093.00px;top:100.00px;color:#dfe1e5;font-weight:normal;transform:scaleX(0.9146);">23.05.2023 09:39:22</div><div class="t" style="left:68.70px;top:130.00px;color:#709de9;font-weight:normal;transform:scaleX(0.8763);">WS-RGBUR-0001</div><div class="t" style="left:235.80px;top:130.00px;color:#dfe1e5;font-weight:normal;transform:scaleX(0.9092);">31.05.2023 16:29:46</div><div class="t" style="left:585.20px;top:130.00px;color:#dfe1e5;font-weight:normal;transform:scaleX(0.8746);">Положение о Kaspersky Securit</div><div class="t" style="left:585.20px;top:144.80px;color:#dfe1e5;font-weight:normal;transform:scaleX(0.8890);">y Network не поддерживается п</div><div class="t" style="left:585.20px;top:159.60px;color:#dfe1e5;font-weight:normal;transform:scaleX(0.9152);">олитикой</div><div class="t" style="left:753.40px;top:130.00px;color:#dfe1e5;font-weight:normal;transform:scaleX(0.9026);">Workstations</div><div class="t" style="left:924.80px;top:130.00px;color:#dfe1e5;font-weight:normal;transform:scaleX(0.8786);">Выполняется</div><div class="t" style="left:1093.00px;top:130.00px;color:#dfe1e5;font-weight:normal;transform:scaleX(0.9146);">23.05.2023 09:39:22</div><div class="t" style="left:68.70px;top:190.00px;color:#709de9;font-weight:normal;transform:scaleX(0.8763);">WS-RGBUR-0002</div><div class="t" style="left:235.80px;top:190.00px;color:#dfe1e5;font-weight:normal;transform:scaleX(0.9092);">31.05.2023 16:29:53</div><div class="t" style="left:585.20px;top:190.00px;color:#dfe1e5;font-weight:normal;transform:scaleX(0.8746);">Положение о Kaspersky Securit</div><div class="t" style="left:585.20px;top:204.80px;color:#dfe1e5;font-weight:normal;transform:scaleX(0.8890);">y Network не поддерживается п</div><div class="t" style="left:585.20px;top:219.60px;color:#dfe1e5;font-weight:normal;transform:scaleX(0.9152);">олитикой</div><div class="t" style="left:753.40px;top:190.00px;color:#dfe1e5;font-weight:normal;transform:scaleX(0.9026);">Workstations</div><div class="t" style="left:924.80px;top:190.00px;color:#dfe1e5;font-weight:normal;transform:scaleX(0.8786);">Выполняется</div><div class="t" style="left:1093.00px;top:190.00px;color:#dfe1e5;font-weight:normal;transform:scaleX(0.9146);">22.05.2023 15:09:42</div><div class="t" style="left:68.70px;top:249.50px;color:#709de9;font-weight:normal;transform:scaleX(0.8763);">WS-RGBUR-0005</div><div class="t" style="left:235.80px;top:249.50px;color:#dfe1e5;font-weight:normal;transform:scaleX(0.9092);">31.05.2023 16:29:45</div><div class="t" style="left:585.70px;top:249.50px;color:#dfe1e5;font-weight:normal;transform:scaleX(0.8507);">Положение о Kaspersky Se...</div><div class="t" style="left:753.40px;top:249.50px;color:#dfe1e5;font-weight:normal;transform:scaleX(0.9026);">Workstations</div><div class="t" style="left:924.80px;top:249.50px;color:#dfe1e5;font-weight:normal;transform:scaleX(0.8786);">Выполняется</div><div class="t" style="left:1093.00px;top:249.50px;color:#dfe1e5;font-weight:normal;transform:scaleX(0.9146);">23.05.2023 09:39:22</div><div class="t" style="left:68.70px;top:280.04px;color:#709de9;font-weight:normal;transform:scaleX(0.8763);">WS-RGBUR-0006</div><div class="t" style="left:235.80px;top:280.04px;color:#dfe1e5;font-weight:normal;transform:scaleX(0.9092);">31.05.2023 16:29:46</div><div class="t" style="left:585.70px;top:280.04px;color:#dfe1e5;font-weight:normal;transform:scaleX(0.8507);">Положение о Kaspersky Se...</div><div class="t" style="left:753.40px;top:280.04px;color:#dfe1e5;font-weight:normal;transform:scaleX(0.9026);">Workstations</div><div class="t" style="left:924.80px;top:280.04px;color:#dfe1e5;font-weight:normal;transform:scaleX(0.8786);">Выполняется</div><div class="t" style="left:1093.00px;top:280.04px;color:#dfe1e5;font-weight:normal;transform:scaleX(0.9146);">23.05.2023 09:39:22</div><div class="t" style="left:68.70px;top:310.58px;color:#709de9;font-weight:normal;transform:scaleX(0.8763);">WS-RGBUR-0007</div><div class="t" style="left:235.80px;top:310.58px;color:#dfe1e5;font-weight:normal;transform:scaleX(0.9092);">31.05.2023 16:29:39</div><div class="t" style="left:585.70px;top:310.58px;color:#dfe1e5;font-weight:normal;transform:scaleX(0.8507);">Положение о Kaspersky Se...</div><div class="t" style="left:753.40px;top:310.58px;color:#dfe1e5;font-weight:normal;transform:scaleX(0.9026);">Workstations</div><div class="t" style="left:924.80px;top:310.58px;color:#dfe1e5;font-weight:normal;transform:scaleX(0.8786);">Выполняется</div><div class="t" style="left:1093.00px;top:310.58px;color:#dfe1e5;font-weight:normal;transform:scaleX(0.9146);">23.05.2023 09:39:22</div><div class="t" style="left:68.70px;top:341.12px;color:#709de9;font-weight:normal;transform:scaleX(0.8763);">WS-RGBUR-0008</div><div class="t" style="left:235.80px;top:341.12px;color:#dfe1e5;font-weight:normal;transform:scaleX(0.9092);">31.05.2023 16:29:56</div><div class="t" style="left:585.70px;top:341.12px;color:#dfe1e5;font-weight:normal;transform:scaleX(0.8507);">Положение о Kaspersky Se...</div><div class="t" style="left:753.40px;top:341.12px;color:#dfe1e5;font-weight:normal;transform:scaleX(0.9026);">Workstations</div><div class="t" style="left:924.80px;top:341.12px;color:#dfe1e5;font-weight:normal;transform:scaleX(0.8786);">Выполняется</div><div class="t" style="left:1093.00px;top:341.12px;color:#dfe1e5;font-weight:normal;transform:scaleX(0.9146);">22.05.2023 15:09:42</div><div class="t" style="left:68.70px;top:371.66px;color:#709de9;font-weight:normal;transform:scaleX(0.8763);">WS-RGBUR-0009</div><div class="t" style="left:235.80px;top:371.66px;color:#dfe1e5;font-weight:normal;transform:scaleX(0.9092);">31.05.2023 16:29:25</div><div class="t" style="left:585.70px;top:371.66px;color:#dfe1e5;font-weight:normal;transform:scaleX(0.8507);">Положение о Kaspersky Se...</div><div class="t" style="left:753.40px;top:371.66px;color:#dfe1e5;font-weight:normal;transform:scaleX(0.9026);">Workstations</div><div class="t" style="left:924.80px;top:371.66px;color:#dfe1e5;font-weight:normal;transform:scaleX(0.8786);">Выполняется</div><div class="t" style="left:1093.00px;top:371.66px;color:#dfe1e5;font-weight:normal;transform:scaleX(0.9146);">23.05.2023 09:39:22</div><div class="t" style="left:68.70px;top:402.20px;color:#709de9;font-weight:normal;transform:scaleX(0.8844);">WS-RGBUR-0011</div><div class="t" style="left:235.80px;top:402.20px;color:#dfe1e5;font-weight:normal;transform:scaleX(0.9092);">31.05.2023 16:29:37</div><div class="t" style="left:585.70px;top:402.20px;color:#dfe1e5;font-weight:normal;transform:scaleX(0.8507);">Положение о Kaspersky Se...</div><div class="t" style="left:753.40px;top:402.20px;color:#dfe1e5;font-weight:normal;transform:scaleX(0.9026);">Workstations</div><div class="t" style="left:924.80px;top:402.20px;color:#dfe1e5;font-weight:normal;transform:scaleX(0.8786);">Выполняется</div><div class="t" style="left:1093.00px;top:402.20px;color:#dfe1e5;font-weight:normal;transform:scaleX(0.9146);">23.05.2023 09:39:22</div><div class="t" style="left:68.70px;top:432.74px;color:#709de9;font-weight:normal;transform:scaleX(0.8763);">WS-RGBUR-0012</div><div class="t" style="left:235.80px;top:432.74px;color:#dfe1e5;font-weight:normal;transform:scaleX(0.9092);">31.05.2023 16:29:25</div><div class="t" style="left:585.70px;top:432.74px;color:#dfe1e5;font-weight:normal;transform:scaleX(0.8507);">Положение о Kaspersky Se...</div><div class="t" style="left:753.40px;top:432.74px;color:#dfe1e5;font-weight:normal;transform:scaleX(0.9026);">Workstations</div><div class="t" style="left:924.80px;top:432.74px;color:#dfe1e5;font-weight:normal;transform:scaleX(0.8786);">Выполняется</div><div class="t" style="left:1093.00px;top:432.74px;color:#dfe1e5;font-weight:normal;transform:scaleX(0.9146);">23.05.2023 09:39:22</div><div class="t" style="left:68.70px;top:463.28px;color:#709de9;font-weight:normal;transform:scaleX(0.8763);">WS-RGBUR-0016</div><div class="t" style="left:235.80px;top:463.28px;color:#dfe1e5;font-weight:normal;transform:scaleX(0.9092);">31.05.2023 16:29:40</div><div class="t" style="left:585.70px;top:463.28px;color:#dfe1e5;font-weight:normal;transform:scaleX(0.8507);">Положение о Kaspersky Se...</div><div class="t" style="left:753.40px;top:463.28px;color:#dfe1e5;font-weight:normal;transform:scaleX(0.9026);">Workstations</div><div class="t" style="left:924.80px;top:463.28px;color:#dfe1e5;font-weight:normal;transform:scaleX(0.8786);">Выполняется</div><div class="t" style="left:1093.00px;top:463.28px;color:#dfe1e5;font-weight:normal;transform:scaleX(0.9146);">22.05.2023 15:09:42</div><div class="t" style="left:68.70px;top:493.82px;color:#709de9;font-weight:normal;transform:scaleX(0.8763);">WS-RGBUR-0017</div><div class="t" style="left:235.80px;top:493.82px;color:#dfe1e5;font-weight:normal;transform:scaleX(0.9092);">31.05.2023 16:29:45</div><div class="t" style="left:585.70px;top:493.82px;color:#dfe1e5;font-weight:normal;transform:scaleX(0.8507);">Положение о Kaspersky Se...</div><div class="t" style="left:753.40px;top:493.82px;color:#dfe1e5;font-weight:normal;transform:scaleX(0.9026);">Workstations</div><div class="t" style="left:924.80px;top:493.82px;color:#dfe1e5;font-weight:normal;transform:scaleX(0.8786);">Выполняется</div><div class="t" style="left:1093.00px;top:493.82px;color:#dfe1e5;font-weight:normal;transform:scaleX(0.9146);">23.05.2023 09:39:22</div><div class="t" style="left:68.70px;top:524.36px;color:#709de9;font-weight:normal;transform:scaleX(0.8763);">WS-RGBUR-0018</div><div class="t" style="left:235.80px;top:524.36px;color:#dfe1e5;font-weight:normal;transform:scaleX(0.9092);">31.05.2023 16:29:42</div><div class="t" style="left:585.70px;top:524.36px;color:#dfe1e5;font-weight:normal;transform:scaleX(0.8507);">Положение о Kaspersky Se...</div><div class="t" style="left:753.40px;top:524.36px;color:#dfe1e5;font-weight:normal;transform:scaleX(0.9026);">Workstations</div><div class="t" style="left:924.80px;top:524.36px;color:#dfe1e5;font-weight:normal;transform:scaleX(0.8786);">Выполняется</div><div class="t" style="left:1093.00px;top:524.36px;color:#dfe1e5;font-weight:normal;transform:scaleX(0.9146);">23.05.2023 09:39:22</div><div class="t" style="left:68.70px;top:554.90px;color:#709de9;font-weight:normal;transform:scaleX(0.8763);">WS-RGBUR-0021</div><div class="t" style="left:235.80px;top:554.90px;color:#dfe1e5;font-weight:normal;transform:scaleX(0.9092);">31.05.2023 16:29:40</div><div class="t" style="left:585.70px;top:554.90px;color:#dfe1e5;font-weight:normal;transform:scaleX(0.8507);">Положение о Kaspersky Se...</div><div class="t" style="left:753.40px;top:554.90px;color:#dfe1e5;font-weight:normal;transform:scaleX(0.9026);">Workstations</div><div class="t" style="left:924.80px;top:554.90px;color:#dfe1e5;font-weight:normal;transform:scaleX(0.8786);">Выполняется</div><div class="t" style="left:1093.00px;top:554.90px;color:#dfe1e5;font-weight:normal;transform:scaleX(0.9146);">23.05.2023 09:39:22</div><div class="t" style="left:68.70px;top:585.44px;color:#709de9;font-weight:normal;transform:scaleX(0.8763);">WS-RGBUR-0023</div><div class="t" style="left:235.80px;top:585.44px;color:#dfe1e5;font-weight:normal;transform:scaleX(0.9092);">31.05.2023 16:29:39</div><div class="t" style="left:585.70px;top:585.44px;color:#dfe1e5;font-weight:normal;transform:scaleX(0.8507);">Положение о Kaspersky Se...</div><div class="t" style="left:753.40px;top:585.44px;color:#dfe1e5;font-weight:normal;transform:scaleX(0.9026);">Workstations</div><div class="t" style="left:924.80px;top:585.44px;color:#dfe1e5;font-weight:normal;transform:scaleX(0.8786);">Выполняется</div><div class="t" style="left:1093.00px;top:585.44px;color:#dfe1e5;font-weight:normal;transform:scaleX(0.9146);">23.05.2023 09:39:22</div><div class="t" style="left:68.70px;top:615.98px;color:#709de9;font-weight:normal;transform:scaleX(0.8763);">WS-RGBUR-0027</div><div class="t" style="left:235.80px;top:615.98px;color:#dfe1e5;font-weight:normal;transform:scaleX(0.9092);">31.05.2023 16:29:25</div><div class="t" style="left:585.70px;top:615.98px;color:#dfe1e5;font-weight:normal;transform:scaleX(0.8507);">Положение о Kaspersky Se...</div><div class="t" style="left:753.40px;top:615.98px;color:#dfe1e5;font-weight:normal;transform:scaleX(0.9026);">Workstations</div><div class="t" style="left:924.80px;top:615.98px;color:#dfe1e5;font-weight:normal;transform:scaleX(0.8786);">Выполняется</div><div class="t" style="left:1093.00px;top:615.98px;color:#dfe1e5;font-weight:normal;transform:scaleX(0.9146);">23.05.2023 09:39:22</div><div class="t" style="left:68.70px;top:646.52px;color:#709de9;font-weight:normal;transform:scaleX(0.8763);">WS-RGBUR-0028</div><div class="t" style="left:235.80px;top:646.52px;color:#dfe1e5;font-weight:normal;transform:scaleX(0.9092);">31.05.2023 16:29:40</div><div class="t" style="left:585.70px;top:646.52px;color:#dfe1e5;font-weight:normal;transform:scaleX(0.8507);">Положение о Kaspersky Se...</div><div class="t" style="left:753.40px;top:646.52px;color:#dfe1e5;font-weight:normal;transform:scaleX(0.9026);">Workstations</div><div class="t" style="left:924.80px;top:646.52px;color:#dfe1e5;font-weight:normal;transform:scaleX(0.8786);">Выполняется</div><div class="t" style="left:1093.00px;top:646.52px;color:#dfe1e5;font-weight:normal;transform:scaleX(0.9146);">23.05.2023 09:39:22</div><div class="t" style="left:180.30px;top:39.90px;color:#dfe1e5;font-weight:normal;transform:scaleX(0.9481);-webkit-text-stroke:0.45px currentColor;">ти</div><div class="t" style="left:47.60px;top:8.59px;font-size:11.4px;color:#eef0f3;font-weight:normal;transform:scaleX(0.9464);z-index:5;">Добавить устройства</div><div class="t" style="left:192.40px;top:8.59px;font-size:11.4px;color:#858a9a;font-weight:normal;transform:scaleX(0.8863);z-index:5;">Удалить</div><div class="t" style="left:269.40px;top:8.59px;font-size:11.4px;color:#858a9a;font-weight:normal;transform:scaleX(0.8995);z-index:5;">Новая задача</div><div class="t" style="left:373.40px;top:8.59px;font-size:11.4px;color:#858a9a;font-weight:normal;transform:scaleX(0.9489);z-index:5;">Переместить в группу</div><div class="t" style="left:506.80px;top:8.59px;font-size:11.4px;color:#858a9a;font-weight:normal;transform:scaleX(0.9392);z-index:5;">Подключиться к удаленному рабочему столу</div><div class="t" style="left:951.90px;top:9.20px;color:#9ea2ab;font-weight:normal;transform:scaleX(0.8644);z-index:5;">Поиск...</div>
</body></html>
